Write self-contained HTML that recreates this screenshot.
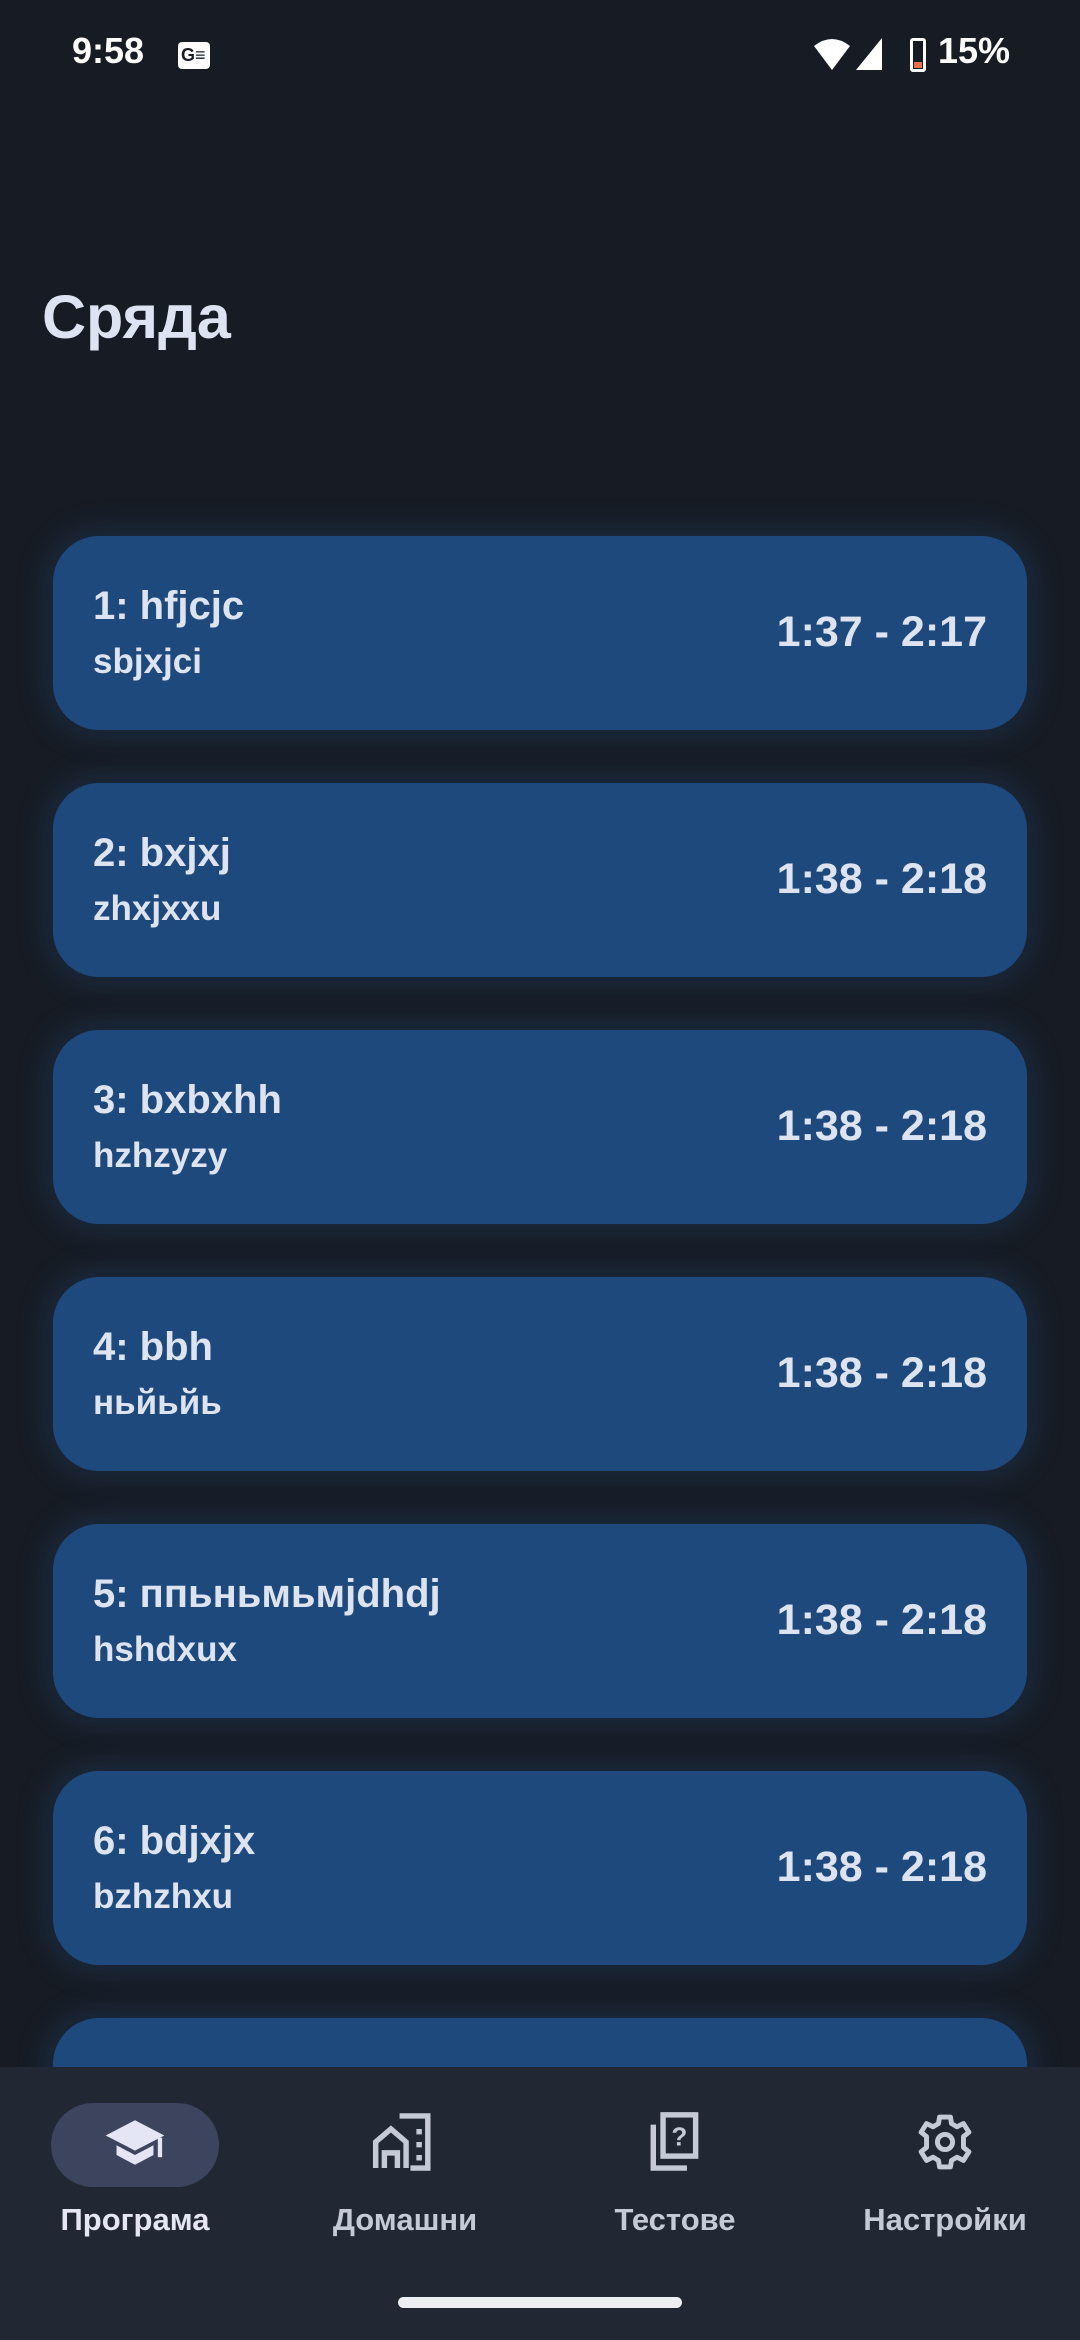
<!DOCTYPE html>
<html><head><meta charset="utf-8"><style>
*{margin:0;padding:0;box-sizing:border-box}
body{width:1080px;height:2340px;background:#171c24;font-family:"Liberation Sans",sans-serif;position:relative;overflow:hidden;color:#dde3f0}
.sb{position:absolute;top:30px;font-weight:bold;font-size:36px;color:#fff}
h1{position:absolute;left:42px;top:282px;font-size:61px;font-weight:bold;color:#dde3f0}
.card{position:absolute;left:53px;width:974px;height:194px;background:#1e497d;border-radius:46px;box-shadow:0 0 30px 6px rgba(40,90,160,0.25)}
.t{position:absolute;left:40px;top:48px;font-size:40px;font-weight:bold}
.s{position:absolute;left:40px;top:106px;font-size:35px;font-weight:bold}
.tm{position:absolute;right:40px;top:72px;font-size:43px;font-weight:bold}
.nav{position:absolute;left:0;top:2067px;width:1080px;height:273px;background:#222833}
.it{position:absolute;top:0;width:270px;text-align:center}
.lbl{position:absolute;top:135px;width:100%;font-size:31px;font-weight:bold;color:#c5cad6}
.ic{position:absolute;top:44px;left:50%;transform:translateX(-50%);width:76px;height:62px}
</style></head><body>
<div class="sb" style="left:72px">9:58</div>
<div style="position:absolute;left:178px;top:42px;width:32px;height:27px;background:#fff;border-radius:4px;font-size:18px;font-weight:bold;color:#171c24;line-height:27px;padding-left:3px">G≡</div>
<svg style="position:absolute;left:812px;top:36px" width="100" height="36" viewBox="0 0 100 36"><path d="M2 10 Q20 -4 38 10 L20 34Z" fill="#fff"/><path d="M44 34 L70 2 V34Z" fill="#fff"/></svg>
<div style="position:absolute;left:910px;top:38px;width:16px;height:34px;border:3px solid #fff;border-radius:3px"><div style="position:absolute;bottom:1px;left:1px;right:1px;height:6px;background:#e8704a"></div></div>
<div class="sb" style="left:938px">15%</div>
<h1>Сряда</h1>

<div class="card" style="top:536px"><div class="t">1: hfjcjc</div><div class="s">sbjxjci</div><div class="tm">1:37 - 2:17</div></div>
<div class="card" style="top:783px"><div class="t">2: bxjxj</div><div class="s">zhxjxxu</div><div class="tm">1:38 - 2:18</div></div>
<div class="card" style="top:1030px"><div class="t">3: bxbxhh</div><div class="s">hzhzyzy</div><div class="tm">1:38 - 2:18</div></div>
<div class="card" style="top:1277px"><div class="t">4: bbh</div><div class="s">ньйьйь</div><div class="tm">1:38 - 2:18</div></div>
<div class="card" style="top:1524px"><div class="t">5: ппьньмьмjdhdj</div><div class="s">hshdxux</div><div class="tm">1:38 - 2:18</div></div>
<div class="card" style="top:1771px"><div class="t">6: bdjxjx</div><div class="s">bzhzhxu</div><div class="tm">1:38 - 2:18</div></div>
<div class="card" style="top:2018px"></div>

<div class="nav">
<div class="it" style="left:0"><div style="position:absolute;left:51px;top:36px;width:168px;height:84px;border-radius:42px;background:#3c445e"></div>
<svg class="ic" viewBox="0 0 70 56"><path d="M35 8 L62 22 L35 36 L8 22Z" fill="#e4e6f6"/><path d="M18 31 V40 L35 49 L52 40 V31 L35 40Z" fill="#e4e6f6"/><path d="M58 24 V42" stroke="#e4e6f6" stroke-width="4"/></svg>
<div class="lbl" style="color:#e4e6f2">Програма</div></div>
<div class="it" style="left:270px"><svg class="ic" viewBox="0 0 70 56" fill="none" stroke="#c5cad6" stroke-width="5"><path d="M8 52 V28 L22 16 L36 28 V52 M16 52 V38 H28 V52"/><path d="M30 4 H56 V52 H40"/><path d="M48 16 v5 M48 28 v5 M48 40 v5"/></svg><div class="lbl">Домашни</div></div>
<div class="it" style="left:540px"><svg class="ic" viewBox="0 0 70 56" fill="none" stroke="#c5cad6" stroke-width="5"><rect x="24" y="3" width="30" height="38"/><path d="M15 12 V52 H46"/><text x="39" y="31" font-size="24" font-family="Liberation Sans" fill="#c5cad6" stroke="none" text-anchor="middle" font-weight="bold">?</text></svg><div class="lbl">Тестове</div></div>
<div class="it" style="left:810px"><svg class="ic" viewBox="0 0 70 56"><g transform="translate(35 28)" fill="none" stroke="#c5cad6" stroke-width="4.5" stroke-linejoin="round"><path d="M-5 -23 H5 L6 -17 L11 -14 L17 -17 L22 -9 L17 -5 V5 L22 9 L17 17 L11 14 L6 17 L5 23 H-5 L-6 17 L-11 14 L-17 17 L-22 9 L-17 5 V-5 L-22 -9 L-17 -17 L-11 -14 L-6 -17Z"/><circle r="7"/></g></svg><div class="lbl">Настройки</div></div>
<div style="position:absolute;left:398px;top:230px;width:284px;height:11px;border-radius:6px;background:#eceef2"></div>
</div>
</body></html>
